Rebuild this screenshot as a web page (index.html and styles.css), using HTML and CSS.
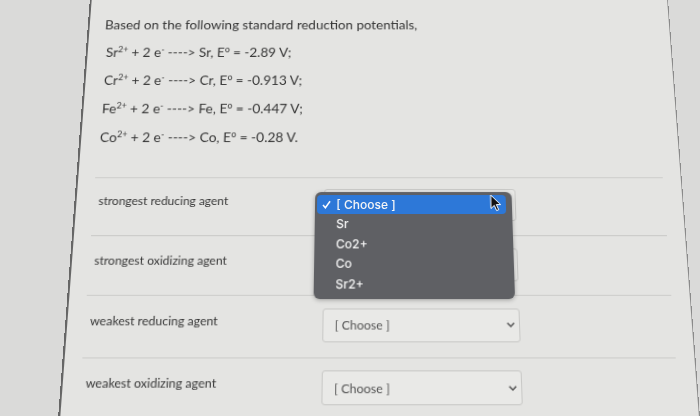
FILE: index.html
```html
<!DOCTYPE html>
<html>
<head>
<meta charset="utf-8">
<link rel="stylesheet" href="styles.css">
</head>
<body>
<div class="page">
  <div class="question">
    <p>Based on the following standard reduction potentials,</p>
    <p class="eq">Sr<sup>2+</sup> + 2 e<sup>-</sup> ----&gt; Sr, E<sup>o</sup> = -2.89 V;</p>
    <p class="eq">Cr<sup>2+</sup> + 2 e<sup>-</sup> ----&gt; Cr, E<sup>o</sup> = -0.913 V;</p>
    <p class="eq">Fe<sup>2+</sup> + 2 e<sup>-</sup> ----&gt; Fe, E<sup>o</sup> = -0.447 V;</p>
    <p class="eq">Co<sup>2+</sup> + 2 e<sup>-</sup> ----&gt; Co, E<sup>o</sup> = -0.28 V.</p>
  </div>
  <div class="answers">
    <div class="row">
      <div class="label">strongest reducing agent</div>
      <div class="select-wrap">
        <div class="select"><span>[ Choose ]</span><svg class="chev" width="8" height="5" viewBox="0 0 8 5"><polyline points="0.7,0.7 4,4 7.3,0.7" fill="none" stroke="#8a6a40" stroke-width="1.4"/></svg></div>
        <div class="menu">
          <div class="item active"><svg class="check" width="9" height="9" viewBox="0 0 9 9"><polyline points="1,5 3.4,7.8 8,1.2" fill="none" stroke="#fff" stroke-width="1.5"/></svg>[ Choose ]</div>
          <div class="item">Sr</div>
          <div class="item">Co2+</div>
          <div class="item">Co</div>
          <div class="item">Sr2+</div>
          <svg class="cursor" width="12" height="18" viewBox="0 0 12 18"><path d="M1 1 L1 14.5 L4.3 11.4 L6.6 16.6 L8.7 15.7 L6.4 10.6 L10.8 10.6 Z" fill="#111" stroke="#fff" stroke-width="1"/></svg>
        </div>
      </div>
    </div>
    <div class="row">
      <div class="label">strongest oxidizing agent</div>
      <div class="select-wrap">
        <div class="select"><span>[ Choose ]</span><svg class="chev" width="8" height="5" viewBox="0 0 8 5"><polyline points="0.7,0.7 4,4 7.3,0.7" fill="none" stroke="#555" stroke-width="1.4"/></svg></div>
      </div>
    </div>
    <div class="row">
      <div class="label">weakest reducing agent</div>
      <div class="select-wrap">
        <div class="select"><span>[ Choose ]</span><svg class="chev" width="8" height="5" viewBox="0 0 8 5"><polyline points="0.7,0.7 4,4 7.3,0.7" fill="none" stroke="#555" stroke-width="1.4"/></svg></div>
      </div>
    </div>
    <div class="row">
      <div class="label">weakest oxidizing agent</div>
      <div class="select-wrap">
        <div class="select"><span>[ Choose ]</span><svg class="chev" width="8" height="5" viewBox="0 0 8 5"><polyline points="0.7,0.7 4,4 7.3,0.7" fill="none" stroke="#555" stroke-width="1.4"/></svg></div>
      </div>
    </div>
  </div>
</div>
</body>
</html>
```
FILE: styles.css
```css
html, body {
  margin: 0;
  padding: 0;
  width: 700px;
  height: 416px;
  overflow: hidden;
  background: #dadad9;
}

.page {
  box-sizing: border-box;
  margin: -20px 0 0 73.5px;
  width: 609.5px;
  height: 480px;
  padding: 21.2px 18px 0 16px;
  background: #e4e4e2;
  border-left: 2px solid #666;
  border-right: 1.5px solid #8a8a8a;
  font-family: Lato, "Noto Sans", sans-serif;
  color: #363636;
  transform-origin: 303.5px 228px;
  transform: matrix3d(1,0,0,0, 0,1,0,-0.00025, 0,0,1,0, 0,0,0,1);
}

.question p {
  margin: 0;
  font-size: 14px;
  line-height: 30px;
  white-space: nowrap;
}

.question p.eq {
  padding-left: 3px;
}

sup {
  font-size: 9px;
  line-height: 0;
  vertical-align: 5.5px;
}

.answers {
  margin: 25.6px 0 0 1px;
}

.row {
  display: flex;
  align-items: flex-start;
  border-top: 1px solid #cdcdcb;
  padding: 11.5px 0 13.8px;
}

.label {
  box-sizing: border-box;
  width: 230.5px;
  padding-left: 5px;
  margin-top: 2.2px;
  font-size: 12px;
  line-height: 20px;
  color: #383838;
}

.select-wrap {
  position: relative;
  width: 192px;
}

.select {
  box-sizing: border-box;
  height: 32px;
  display: flex;
  align-items: center;
  justify-content: space-between;
  padding: 0 4px 0 11.5px;
  background: #e9e9e7;
  border: 1px solid #c9c9c7;
  border-radius: 3px;
  font-size: 12px;
  color: #555;
}

.chev {
  display: block;
}

.menu {
  position: absolute;
  top: 2.6px;
  left: -8.8px;
  width: 196.8px;
  box-sizing: border-box;
  padding: 3px 6px 4.6px 2px;
  background: #5f6064;
  border-radius: 6px;
  box-shadow: 0 1px 4px rgba(0,0,0,0.3);
  font-family: Inter, Roboto, sans-serif;
  font-size: 12px;
  font-weight: 500;
  color: #f6f6f6;
  z-index: 2;
}

.item {
  position: relative;
  height: 19.5px;
  line-height: 19.5px;
  padding-left: 19.6px;
}

.item.active {
  background: #2d78d8;
  border-radius: 4px;
}

.check {
  position: absolute;
  left: 5.5px;
  top: 5.5px;
}

.cursor {
  position: absolute;
  left: 175px;
  top: 2.6px;
}
```
